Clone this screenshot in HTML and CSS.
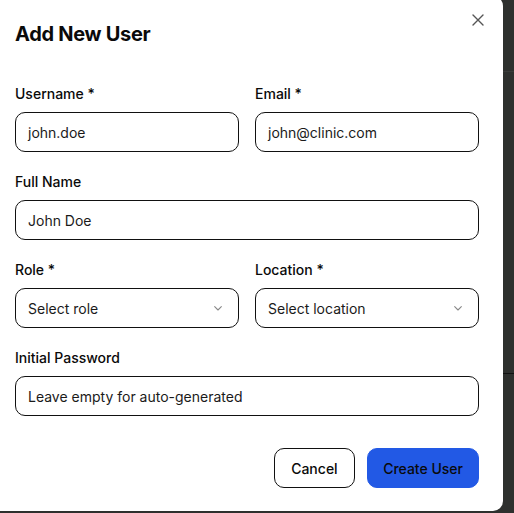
FILE: index.html
```html
<!DOCTYPE html>
<html>
<head>
<meta charset="utf-8">
<link rel="stylesheet" href="styles.css">
</head>
<body>
<div class="backdrop">
  <div class="line line-a"></div>
  <div class="line line-b"></div>
  <div class="dialog">
    <button class="close" aria-label="Close">
      <svg width="16" height="16" viewBox="0 0 16 16" fill="none" stroke="#555" stroke-width="1.4" stroke-linecap="round"><path d="M3 3l10 10M13 3L3 13"/></svg>
    </button>
    <h2 class="title">Add New User</h2>
    <form class="form">
      <div class="row">
        <div class="field">
          <label class="label">Username *</label>
          <div class="input">john.doe</div>
        </div>
        <div class="field">
          <label class="label">Email *</label>
          <div class="input">john@clinic.com</div>
        </div>
      </div>
      <div class="field">
        <label class="label">Full Name</label>
        <div class="input">John Doe</div>
      </div>
      <div class="row">
        <div class="field">
          <label class="label">Role *</label>
          <div class="input select">Select role
            <svg width="16" height="16" viewBox="0 0 24 24" fill="none" stroke="#888" stroke-width="1.6" stroke-linecap="round" stroke-linejoin="round"><path d="m7 10 5 5 5-5"/></svg>
          </div>
        </div>
        <div class="field">
          <label class="label">Location *</label>
          <div class="input select">Select location
            <svg width="16" height="16" viewBox="0 0 24 24" fill="none" stroke="#888" stroke-width="1.6" stroke-linecap="round" stroke-linejoin="round"><path d="m7 10 5 5 5-5"/></svg>
          </div>
        </div>
      </div>
      <div class="field">
        <label class="label">Initial Password</label>
        <div class="input">Leave empty for auto-generated</div>
      </div>
      <div class="actions">
        <button type="button" class="btn btn-outline">Cancel</button>
        <button type="button" class="btn btn-primary">Create User</button>
      </div>
    </form>
  </div>
</div>
</body>
</html>
```

FILE: styles.css
```css
* { box-sizing: border-box; }
html, body { margin: 0; padding: 0; }
body {
  width: 514px;
  height: 513px;
  overflow: hidden;
  font-family: Inter, "Noto Sans", sans-serif;
  color: #111;
}
.backdrop {
  position: relative;
  width: 514px;
  height: 513px;
  background: #2e302e;
  overflow: hidden;
}
.line {
  position: absolute;
  left: 0;
  right: 0;
  height: 1px;
}
.line-a { top: 71px; background: #3a3c3a; }
.line-b { top: 373px; background: #111; }
.dialog {
  position: relative;
  margin-left: -9px;
  margin-top: -4px;
  width: 512px;
  height: 515px;
  background: #fff;
  border-radius: 10px;
  padding: 24px;
}
.close {
  position: absolute;
  top: 16px;
  right: 17px;
  width: 16px;
  height: 16px;
  padding: 0;
  border: 0;
  background: none;
  display: flex;
}
.title {
  margin: 0;
  font-size: 20px;
  line-height: 28px;
  font-weight: 700;
  letter-spacing: -0.3px;
  color: #0a0a0a;
}
.form {
  margin-top: 36px;
  display: flex;
  flex-direction: column;
  gap: 20px;
}
.row {
  display: grid;
  grid-template-columns: 1fr 1fr;
  gap: 16px;
}
.field {
  display: flex;
  flex-direction: column;
  gap: 8px;
}
.label {
  font-size: 14px;
  line-height: 20px;
  font-weight: 500;
  color: #0a0a0a;
}
.input {
  height: 40px;
  border: 1px solid #111;
  border-radius: 10px;
  padding: 0 12px;
  display: flex;
  align-items: center;
  justify-content: space-between;
  font-size: 14px;
  color: #1a1a1a;
}
.actions {
  margin-top: 12px;
  display: flex;
  justify-content: flex-end;
  gap: 12px;
}
.btn {
  height: 40px;
  border-radius: 10px;
  padding: 0 16px;
  font-family: inherit;
  font-size: 14px;
  font-weight: 500;
  color: #0a0a0a;
}
.btn-outline {
  background: #fff;
  border: 1px solid #111;
  padding: 0 16.5px;
}
.btn-primary {
  background: #2259e5;
  border: 1px solid #2259e5;
  color: #0a0a0a;
  padding: 0 15px;
}
```
